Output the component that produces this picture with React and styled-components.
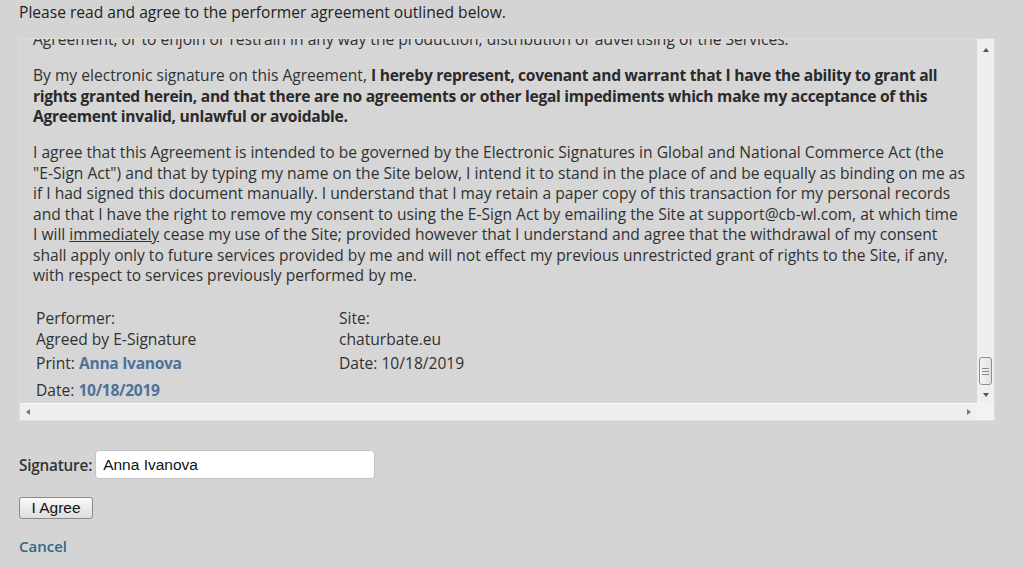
import React from "react";
import styled, { createGlobalStyle } from "styled-components";

const Global = createGlobalStyle`
  html, body { margin: 0; padding: 0; background: #d4d4d4; }
  body { font-family: "Open Sans", "DejaVu Sans", sans-serif; color: #333; }
`;

const Page = styled.div`
  padding: 2px 29px 0 19px;
  font-size: 15.6px;
`;

const Intro = styled.div`
  line-height: 20px;
  color: #222;
  margin-bottom: 16px;
`;

const AgreementBox = styled.div`
  display: grid;
  grid-template-columns: 1fr 17px;
  grid-template-rows: 364px 17px;
  border: 1px solid #dedede;
  background: #d6d6d6;
`;

const Viewport = styled.div`
  overflow: hidden;
  padding: 0 13px;
`;

const Content = styled.div`
  margin-top: -10px;
  white-space: nowrap;
`;

const Para = styled.p`
  margin: 0 0 15.5px;
  line-height: 20.5px;
  color: #313131;
`;

const Strong = styled.b`
  font-weight: 700;
  color: #2a2a2a;
  letter-spacing: -0.28px;
`;

const Underline = styled.span`
  text-decoration: underline;
`;

const SignTable = styled.div`
  display: grid;
  grid-template-columns: 303px auto;
  margin-top: 22px;
  padding-left: 3px;
  line-height: 21px;
`;

const Cell = styled.div`
  color: #313131;
`;

const Filled = styled.span`
  display: inline-block;
  padding: 3px 0;
  font-weight: ${(p) => (p.$plain ? 400 : 700)};
  color: ${(p) => (p.$plain ? "#313131" : "#4d7199")};
  letter-spacing: ${(p) => (p.$plain ? "0" : "-0.3px")};
`;

const VScroll = styled.div`
  background: #efefef;
  display: flex;
  flex-direction: column;
  align-items: center;
  padding: 2px 0 6px;
`;

const Arrow = styled.div`
  width: 0;
  height: 0;
  border-left: 3px solid transparent;
  border-right: 3px solid transparent;
  ${(p) =>
    p.dir === "up"
      ? "border-bottom: 4px solid #555; margin-top: 7px;"
      : "border-top: 4px solid #555; margin-top: 8px;"}
`;

const Track = styled.div`
  flex: 1;
`;

const Thumb = styled.div`
  width: 13px;
  height: 28px;
  box-sizing: border-box;
  border: 1px solid #8f8f8f;
  border-radius: 3px;
  background: linear-gradient(to right, #f4f4f4, #e2e2e2);
  display: flex;
  flex-direction: column;
  justify-content: center;
  align-items: center;
  gap: 2px;
`;

const Grip = styled.div`
  width: 7px;
  height: 1px;
  background: #8a8a8a;
`;

const HScroll = styled.div`
  background: #efefef;
  display: flex;
  align-items: center;
  justify-content: space-between;
  padding: 0 6px;
  border-top: 1px solid #f6f6f6;
`;

const HArrow = styled.div`
  width: 0;
  height: 0;
  border-top: 3px solid transparent;
  border-bottom: 3px solid transparent;
  ${(p) =>
    p.dir === "left"
      ? "border-right: 4px solid #777;"
      : "border-left: 4px solid #777;"}
`;

const Corner = styled.div`
  background: #f2f2f2;
`;

const SignatureRow = styled.div`
  display: flex;
  align-items: center;
  gap: 3px;
  margin-top: 29px;
`;

const Label = styled.label`
  font-weight: 600;
  color: #333;
  font-size: 15.3px;
  letter-spacing: -0.2px;
`;

const Input = styled.input`
  width: 280px;
  height: 29px;
  box-sizing: border-box;
  border: 1px solid #c4c4c4;
  border-radius: 4px;
  background: #fff;
  padding: 0 7px;
  font-family: "Liberation Sans", Arial, sans-serif;
  font-size: 15.5px;
  color: #111;
  outline: none;
`;

const AgreeButton = styled.button`
  display: block;
  margin-top: 18px;
  width: 74px;
  height: 22px;
  box-sizing: border-box;
  border: 1px solid #8a8a8a;
  border-radius: 3px;
  background: linear-gradient(#fafafa, #dcdcdc);
  font-family: "Liberation Sans", Arial, sans-serif;
  font-size: 15.5px;
  color: #111;
  padding: 0;
  line-height: 18px;
`;

const CancelLink = styled.a`
  display: inline-block;
  margin-top: 17px;
  font-weight: 600;
  font-size: 15px;
  color: #2b6b87;
  text-decoration: none;
  line-height: 20px;
`;

export default function App() {
  return (
    <>
      <Global />
      <Page>
        <Intro>Please read and agree to the performer agreement outlined below.</Intro>
        <AgreementBox>
          <Viewport>
            <Content>
              <Para>
                Agreement, or to enjoin or restrain in any way the production, distribution or advertising of the Services.
              </Para>
              <Para>
                By my electronic signature on this Agreement,{" "}
                <Strong>
                  I hereby represent, covenant and warrant that I have the ability to grant all
                  <br />
                  rights granted herein, and that there are no agreements or other legal impediments which make my acceptance of this
                  <br />
                  Agreement invalid, unlawful or avoidable.
                </Strong>
              </Para>
              <Para>
                I agree that this Agreement is intended to be governed by the Electronic Signatures in Global and National Commerce Act (the
                <br />
                "E-Sign Act") and that by typing my name on the Site below, I intend it to stand in the place of and be equally as binding on me as
                <br />
                if I had signed this document manually. I understand that I may retain a paper copy of this transaction for my personal records
                <br />
                and that I have the right to remove my consent to using the E-Sign Act by emailing the Site at support@cb-wl.com, at which time
                <br />
                I will <Underline>immediately</Underline> cease my use of the Site; provided however that I understand and agree that the withdrawal of my consent
                <br />
                shall apply only to future services provided by me and will not effect my previous unrestricted grant of rights to the Site, if any,
                <br />
                with respect to services previously performed by me.
              </Para>
              <SignTable>
                <Cell>Performer:</Cell>
                <Cell>Site:</Cell>
                <Cell>Agreed by E-Signature</Cell>
                <Cell>chaturbate.eu</Cell>
                <Cell>
                  Print: <Filled>Anna Ivanova</Filled>
                </Cell>
                <Cell>
                  <Filled $plain>Date: 10/18/2019</Filled>
                </Cell>
                <Cell>
                  Date: <Filled>10/18/2019</Filled>
                </Cell>
                <Cell />
              </SignTable>
            </Content>
          </Viewport>
          <VScroll>
            <Arrow dir="up" />
            <Track />
            <Thumb>
              <Grip />
              <Grip />
              <Grip />
            </Thumb>
            <Arrow dir="down" />
          </VScroll>
          <HScroll>
            <HArrow dir="left" />
            <HArrow dir="right" />
          </HScroll>
          <Corner />
        </AgreementBox>
        <SignatureRow>
          <Label htmlFor="sig">Signature:</Label>
          <Input id="sig" defaultValue="Anna Ivanova" />
        </SignatureRow>
        <AgreeButton>I Agree</AgreeButton>
        <CancelLink href="#">Cancel</CancelLink>
      </Page>
    </>
  );
}
